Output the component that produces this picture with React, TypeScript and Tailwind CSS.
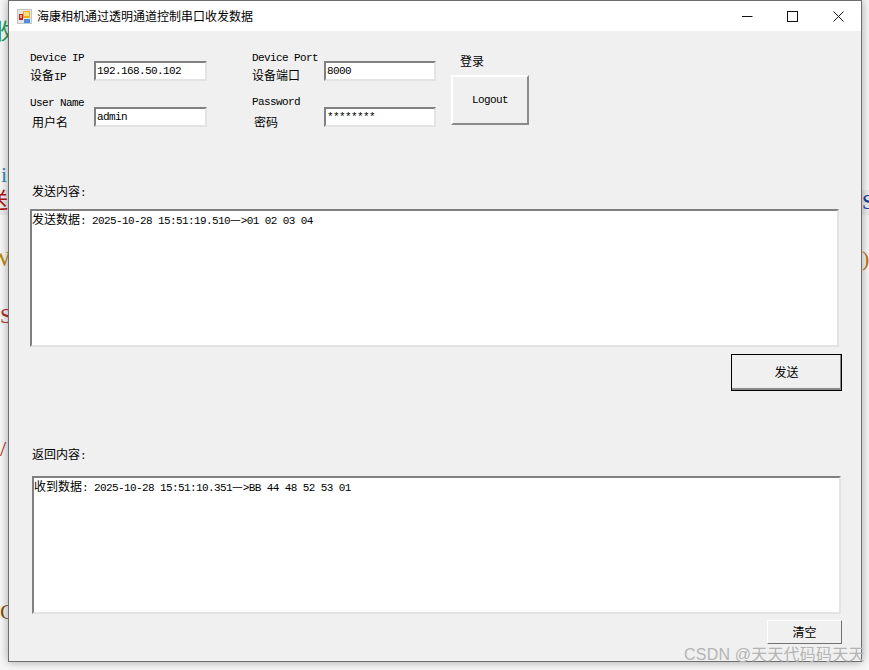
const mono = { fontFamily: '"Liberation Mono", "Noto Sans CJK SC", monospace' };

function Cjk({ children, className = '' }: { children: React.ReactNode; className?: string }) {
  return <span className={`text-[12px] leading-[12px] font-['Noto_Sans_CJK_SC',sans-serif] ${className}`}>{children}</span>;
}

function Latin({ children }: { children: React.ReactNode }) {
  return <span className="text-[11px] leading-[12px] tracking-[-0.6px] font-['Liberation_Mono',monospace]">{children}</span>;
}

function Field({ en, cn, value, labelClass, subClass, inputClass }: { en: string; cn: React.ReactNode; value: string; labelClass: string; subClass: string; inputClass: string }) {
  return (
    <div className="flex">
      <div className={`flex flex-col ${labelClass}`}>
        <div className="h-[12px] leading-[12px] whitespace-nowrap"><Latin>{en}</Latin></div>
        <div className={`h-[12px] leading-[12px] whitespace-nowrap ${subClass}`}>{cn}</div>
      </div>
      <div className={`h-[20px] border-2 border-t-[#808080] border-l-[#808080] border-r-[#e3e3e3] border-b-[#e3e3e3] bg-white pl-[1px] pt-[1px] leading-[12px] ${inputClass}`}>
        <Latin>{value}</Latin>
      </div>
    </div>
  );
}

function LogBox({ children }: { children: React.ReactNode }) {
  return (
    <div className="h-[138px] w-[809px] border-2 border-t-[#808080] border-l-[#808080] border-r-[#e3e3e3] border-b-[#e3e3e3] bg-white pt-[2px] leading-[12px] whitespace-nowrap">
      {children}
    </div>
  );
}

function AppIcon() {
  return (
    <svg width="15" height="15" viewBox="0 0 15 15" className="shrink-0">
      <rect x="0" y="0" width="15" height="15" fill="#c4c4c4" />
      <rect x="1" y="1" width="13" height="13" fill="#e6e6e6" />
      <rect x="2" y="5" width="4" height="6" fill="#c8201c" />
      <rect x="3" y="6" width="2" height="3" fill="#f0a0a0" />
      <rect x="6" y="2" width="7" height="7" fill="#e8b020" />
      <rect x="7" y="3" width="5" height="4" fill="#f8e080" />
      <rect x="7" y="10" width="6" height="4" fill="#4a90e0" />
    </svg>
  );
}

// code of the page behind the window, only its edges stick out
const behind = [
  { text: '收', cls: 'left-[-8px] top-[20px] text-[#1f9d55]' },
  { text: 'i', cls: 'left-[1px] top-[163px] text-[#2b91af]' },
  { text: '送', cls: 'left-[-14px] top-[189px] text-[#b01010]' },
  { text: 'W', cls: 'left-[-10px] top-[247px] text-[#b8860b]' },
  { text: 'S', cls: 'left-[0px] top-[304px] text-[#b03030]' },
  { text: '/', cls: 'left-[0px] top-[437px] text-[#a83010]' },
  { text: 'C', cls: 'left-[0px] top-[600px] text-[#8a5010]' },
  { text: 'S', cls: 'left-[862px] top-[190px] text-[#1a3fa0]' },
  { text: ')', cls: 'left-[862px] top-[247px] text-[#c07010]' },
];

export default function App() {
  return (
    <div className="relative h-[670px] w-[869px] overflow-hidden bg-[#f7f7f7]" style={mono}>
      <div className="absolute left-0 top-[190px] h-[25px] w-[869px] bg-[#ececec]" />
      {behind.map((b, i) => (
        <span key={i} className={`absolute text-[22px] leading-[24px] font-['Liberation_Serif','Noto_Sans_CJK_SC',serif] ${b.cls}`}>{b.text}</span>
      ))}

      <div className="absolute left-[8px] top-0 flex h-[662px] w-[854px] flex-col border border-[#6e6e6e] bg-[#f0f0f0] text-black shadow-[0_0_9px_rgba(0,0,0,0.35)]">
        {/* title bar */}
        <div className="flex h-[30px] shrink-0 items-center bg-white pl-[8px]">
          <AppIcon />
          <Cjk className="ml-[5px] whitespace-nowrap">海康相机通过透明通道控制串口收发数据</Cjk>
          <div className="ml-auto flex items-center pr-[17px]">
            <svg width="11" height="11" viewBox="0 0 11 11" className="mr-[34px]"><path d="M0 5.5H10.5" stroke="#111" strokeWidth="1" /></svg>
            <svg width="11" height="11" viewBox="0 0 11 11" className="mr-[35px]"><rect x="0.5" y="0.5" width="10" height="10" fill="none" stroke="#111" strokeWidth="1" /></svg>
            <svg width="11" height="11" viewBox="0 0 11 11"><path d="M0.5 0.5L10.5 10.5M10.5 0.5L0.5 10.5" stroke="#111" strokeWidth="1" /></svg>
          </div>
        </div>

        {/* login form */}
        <div className="flex pl-[21px] pt-[20px]">
          <div className="flex w-[199px] flex-col gap-[15px]">
            <Field en="Device IP" cn={<><Cjk>设备</Cjk><Latin>IP</Latin></>} value="192.168.50.102" labelClass="w-[64px]" subClass="mt-[6px]" inputClass="mt-[10px] w-[113px]" />
            <Field en="User Name" cn={<Cjk className="pl-[2px]">用户名</Cjk>} value="admin" labelClass="w-[64px]" subClass="mt-[8px]" inputClass="mt-[11px] w-[113px]" />
          </div>
          <div className="ml-[23px] flex w-[199px] flex-col gap-[14px]">
            <Field en="Device Port" cn={<Cjk>设备端口</Cjk>} value="8000" labelClass="w-[72px]" subClass="mt-[6px]" inputClass="mt-[10px] w-[112px]" />
            <Field en="Password" cn={<Cjk className="pl-[2px]">密码</Cjk>} value="********" labelClass="w-[72px]" subClass="mt-[9px]" inputClass="mt-[12px] w-[112px]" />
          </div>
          <div className="flex flex-col">
            <div className="ml-[9px] mt-[4px] h-[12px] leading-[12px]"><Cjk>登录</Cjk></div>
            <div className="mt-[8px] flex h-[50px] w-[78px] items-center justify-center border-2 border-t-white border-l-white border-r-[#8a8a8a] border-b-[#8a8a8a]">
              <Latin>Logout</Latin>
            </div>
          </div>
        </div>

        {/* send */}
        <div className="ml-[23px] mt-[57px] h-[12px] leading-[12px]"><Cjk>发送内容</Cjk><Latin>:</Latin></div>
        <div className="ml-[21px] mt-[12px]">
          <LogBox><Cjk>发送数据</Cjk><Latin>: 2025-10-28 15:51:19.510</Latin><Cjk>—</Cjk><Latin>&gt;01 02 03 04</Latin></LogBox>
        </div>
        <div className="flex justify-end pr-[19px] pt-[7px]">
          <div className="flex h-[37px] w-[111px] items-center justify-center border border-black bg-[#f0f0f0] pb-[2px] shadow-[inset_0_-2px_0_#8a8a8a,inset_-1px_0_0_#8a8a8a]">
            <Cjk>发送</Cjk>
          </div>
        </div>

        {/* receive */}
        <div className="ml-[23px] mt-[57px] h-[12px] leading-[12px]"><Cjk>返回内容</Cjk><Latin>:</Latin></div>
        <div className="ml-[23px] mt-[16px]">
          <LogBox><Cjk>收到数据</Cjk><Latin>: 2025-10-28 15:51:10.351</Latin><Cjk>—</Cjk><Latin>&gt;BB 44 48 52 53 01</Latin></LogBox>
        </div>
        <div className="flex justify-end pr-[19px] pt-[6px]">
          <div className="flex h-[24px] w-[75px] items-center justify-center border border-t-white border-l-white border-r-[#707070] border-b-[#707070]">
            <Cjk>清空</Cjk>
          </div>
        </div>
      </div>

      <div className="absolute left-[684px] top-[645px] whitespace-nowrap text-[16px] leading-[20px] tracking-[0.2px] text-[#b4b4b4] font-['Liberation_Sans','Noto_Sans_CJK_SC',sans-serif]">
        CSDN @天天代码码天天
      </div>
    </div>
  );
}
